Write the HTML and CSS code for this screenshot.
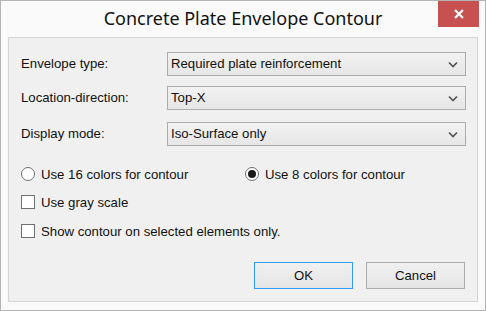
FILE: index.html
```html
<!DOCTYPE html>
<html lang="en">
<head>
    <meta charset="UTF-8">
    <meta name="viewport" content="width=device-width, initial-scale=1.0">
    <title>Concrete Plate Envelope Contour</title>
    <link rel="stylesheet" href="styles.css">
</head>
<body>
    <div class="window">
        <div class="titlebar">
            <span></span>
            <h1 class="title">Concrete Plate Envelope Contour</h1>
            <div class="close-btn">
                <svg width="12" height="10" viewBox="0 0 12 10">
                    <path d="M2 1l8 8M10 1l-8 8" stroke="#fff" stroke-width="2.2" fill="none"/>
                </svg>
            </div>
        </div>

        <div class="panel">
            <div class="field">
                <label>Envelope type:</label>
                <div class="combo">
                    <span>Required plate reinforcement</span>
                    <svg class="chevron" width="10" height="7" viewBox="0 0 10 7"><path d="M1 1.5l4 4 4-4" stroke="#555" stroke-width="1.7" fill="none"/></svg>
                </div>
            </div>
            <div class="field field-2">
                <label>Location-direction:</label>
                <div class="combo">
                    <span>Top-X</span>
                    <svg class="chevron" width="10" height="7" viewBox="0 0 10 7"><path d="M1 1.5l4 4 4-4" stroke="#555" stroke-width="1.7" fill="none"/></svg>
                </div>
            </div>
            <div class="field field-3">
                <label>Display mode:</label>
                <div class="combo">
                    <span>Iso-Surface only</span>
                    <svg class="chevron" width="10" height="7" viewBox="0 0 10 7"><path d="M1 1.5l4 4 4-4" stroke="#555" stroke-width="1.7" fill="none"/></svg>
                </div>
            </div>

            <div class="radio-row">
                <div class="option option-wide">
                    <span class="radio"></span>
                    <span>Use 16 colors for contour</span>
                </div>
                <div class="option">
                    <span class="radio checked"></span>
                    <span>Use 8 colors for contour</span>
                </div>
            </div>
            <div class="option check-1">
                <span class="checkbox"></span>
                <span>Use gray scale</span>
            </div>
            <div class="option check-2">
                <span class="checkbox"></span>
                <span>Show contour on selected elements only.</span>
            </div>

            <div class="buttons">
                <div class="btn btn-default">OK</div>
                <div class="btn">Cancel</div>
            </div>
        </div>
    </div>
</body>
</html>
```

FILE: styles.css
```css
body {
    margin: 0;
    font-family: "Liberation Sans", Arial, sans-serif;
    font-size: 13.2px;
    color: #111;
}
.window {
    width: 486px;
    height: 311px;
    box-sizing: border-box;
    border: 1px solid #b4b4b4;
    background: #fafafa;
    display: flex;
    flex-direction: column;
}
.titlebar {
    height: 36px;
    display: grid;
    grid-template-columns: 1fr auto 1fr;
    align-items: start;
}
.title {
    margin: 0;
    padding-top: 6px;
    font-family: "Noto Sans", "Open Sans", sans-serif;
    font-weight: normal;
    font-size: 18px;
    color: #111;
    line-height: 22px;
}
.close-btn {
    justify-self: end;
    margin-right: 6px;
    width: 41px;
    height: 26px;
    background: #c75050;
    display: flex;
    align-items: center;
    justify-content: center;
}
.panel {
    flex: 1;
    margin: 0 7px 8px 7px;
    border: 1px solid #d5d5d5;
    background: #f0f0f0;
    padding: 14px 11px 0 12px;
}
.field {
    display: flex;
    align-items: center;
    height: 24px;
}
.field-2 {
    margin-top: 10px;
}
.field-3 {
    margin-top: 12px;
}
.field label {
    width: 146px;
    padding-bottom: 1px;
}
.combo {
    flex: 1;
    height: 24px;
    box-sizing: border-box;
    border: 1px solid #acacac;
    background: linear-gradient(#f2f2f2, #e6e6e6);
    display: flex;
    align-items: center;
    justify-content: space-between;
    padding: 0 7px 1px 3px;
}
.chevron {
    margin-top: 2px;
}
.radio-row {
    display: flex;
    margin-top: 20px;
}
.option {
    display: flex;
    align-items: center;
    height: 16px;
    gap: 6px;
}
.option-wide {
    width: 224px;
}
.check-1 {
    margin-top: 12px;
}
.check-2 {
    margin-top: 13px;
}
.radio {
    width: 14px;
    height: 14px;
    box-sizing: border-box;
    border: 1px solid #707070;
    border-radius: 50%;
    background: #fff;
    display: flex;
    align-items: center;
    justify-content: center;
}
.radio.checked::after {
    content: "";
    width: 8px;
    height: 8px;
    border-radius: 50%;
    background: #1a1a1a;
}
.checkbox {
    width: 14px;
    height: 14px;
    box-sizing: border-box;
    border: 1px solid #707070;
    background: #fff;
}
.buttons {
    display: flex;
    justify-content: flex-end;
    gap: 13px;
    margin-top: 23px;
    margin-right: 1px;
}
.btn {
    width: 99px;
    height: 27px;
    box-sizing: border-box;
    border: 1px solid #acacac;
    background: linear-gradient(#f0f0f0, #e5e5e5);
    display: flex;
    align-items: center;
    justify-content: center;
    padding-bottom: 1px;
}
.btn-default {
    border-color: #3399ff;
}
```
